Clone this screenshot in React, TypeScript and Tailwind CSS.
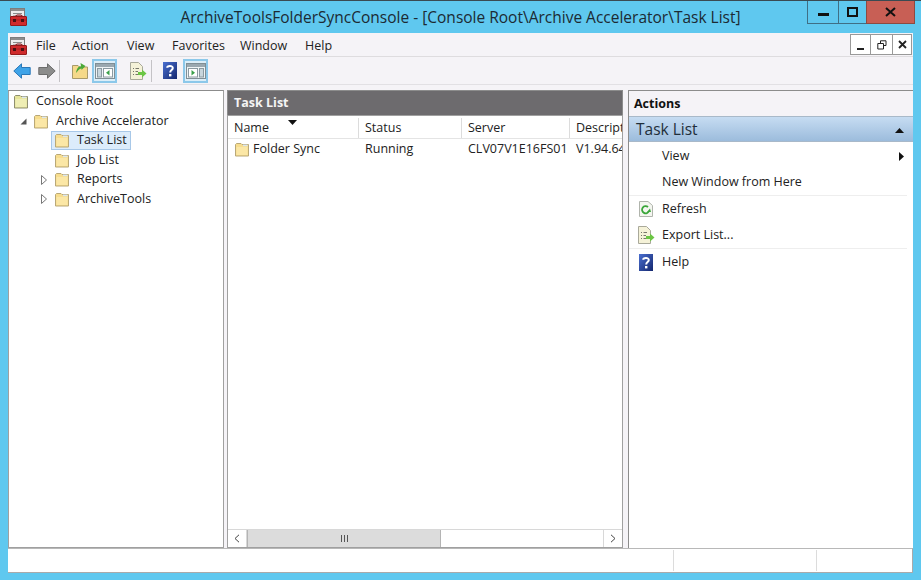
import React from 'react';

const font = { fontFamily: '"Open Sans", "Noto Sans", sans-serif' };

function Folder({ pale = false }: { pale?: boolean }) {
  return (
    <svg width="16" height="15" viewBox="0 0 16 15" className="shrink-0">
      <path d="M1.5 14V2.5L2.5 1.5H7L8 2.5H14.5V14Z" fill={pale ? '#e6e49a' : '#f7dd8e'} stroke={pale ? '#8f8f70' : '#b9a878'} />
      <path d="M2.5 13V5H13.5V13Z" fill={pale ? '#efeeb4' : '#fbe7a6'} />
      <rect x="9" y="2.6" width="4.5" height="1.6" fill="#dbe6ee" />
    </svg>
  );
}

function Toolbox({ className = '' }: { className?: string }) {
  return (
    <svg width="17" height="18" viewBox="0 0 17 18" className={className}>
      <rect x="0.5" y="0.5" width="14" height="10" fill="#ececec" stroke="#7d7d7d" />
      <rect x="1" y="1" width="13" height="2" fill="#8d8d8d" />
      <path d="M3 5.5H12M3 8H12" stroke="#8a8a8a" />
      <path d="M5 8.5L7 7H11L13 8.5" fill="none" stroke="#8f1319" />
      <rect x="0.5" y="8.5" width="16" height="9" rx="0.5" fill="#cf2a2c" stroke="#951a1c" />
      <path d="M1 12H16" stroke="#a51d20" />
      <rect x="3" y="11" width="3" height="3" fill="#4a1012" />
      <rect x="11" y="11" width="3" height="3" fill="#4a1012" />
    </svg>
  );
}

function Help() {
  return (
    <svg width="14" height="17" viewBox="0 0 14 17">
      <defs>
        <linearGradient id="hlp" x1="0" y1="0" x2="1" y2="1">
          <stop offset="0" stopColor="#4a6fd0" />
          <stop offset="1" stopColor="#14276e" />
        </linearGradient>
      </defs>
      <rect width="14" height="17" fill="url(#hlp)" />
      <path d="M4.2 5.8C4.2 3.6 9.8 3.2 9.8 6C9.8 8 7.2 8 7.2 10.4" fill="none" stroke="#fff" strokeWidth="2" />
      <rect x="6" y="12" width="2.4" height="2.4" fill="#fff" />
    </svg>
  );
}

function ExportIcon() {
  return (
    <svg width="18" height="18" viewBox="0 0 18 18">
      <path d="M1.5 0.5H9.5L13.5 4.5V17.5H1.5Z" fill="#f5f2d8" stroke="#a9a99a" />
      <path d="M4 6.5H5M6.5 6.5H10M4 9.5H5M6.5 9.5H9M4 12.5H5M6.5 12.5H9" stroke="#77776a" />
      <path d="M9 10H13V7.5L17.5 11.5L13 15.5V13H9Z" fill="#6cc644" />
    </svg>
  );
}

function PaneIcon({ side }: { side: 'left' | 'right' }) {
  return (
    <svg width="20" height="16" viewBox="0 0 20 16">
      <rect x="0.5" y="0.5" width="19" height="15" fill="#eef3f5" stroke="#7f8e95" />
      <rect x="1" y="1" width="18" height="3" fill="#9aa8b0" />
      {side === 'left' ? (
        <>
          <rect x="2.5" y="5.5" width="4" height="8.5" fill="#c8d6dd" stroke="#8b9aa1" />
          <rect x="8.5" y="5.5" width="9" height="8.5" fill="#fff" stroke="#8b9aa1" />
          <path d="M14.5 7L11 9.7L14.5 12.5Z" fill="#3aa04a" />
        </>
      ) : (
        <>
          <rect x="2.5" y="5.5" width="9" height="8.5" fill="#fff" stroke="#8b9aa1" />
          <rect x="13.5" y="5.5" width="4" height="8.5" fill="#c8d6dd" stroke="#8b9aa1" />
          <path d="M5.5 7L9 9.7L5.5 12.5Z" fill="#3aa04a" />
        </>
      )}
    </svg>
  );
}

function Arrow({ dir, color, edge }: { dir: 'left' | 'right'; color: string; edge: string }) {
  return (
    <svg width="18" height="16" viewBox="0 0 18 16">
      <path
        d={dir === 'left' ? 'M0.8 8L8.5 0.8V4.5H17.2V11.5H8.5V15.2Z' : 'M17.2 8L9.5 0.8V4.5H0.8V11.5H9.5V15.2Z'}
        fill={color}
        stroke={edge}
      />
    </svg>
  );
}

function TreeRow({
  label, indent, twisty, selected, pale, noTwisty,
}: { label: string; indent: string; twisty?: 'open' | 'closed'; selected?: boolean; pale?: boolean; noTwisty?: boolean }) {
  return (
    <div className={`flex h-[19.5px] items-center ${indent}`}>
      {!noTwisty && (
        <span className="flex w-[14px] shrink-0 items-center justify-center">
          {twisty === 'open' && (
            <svg width="7" height="7" viewBox="0 0 7 7"><path d="M6.5 0.5V6.5H0.5Z" fill="#555" /></svg>
          )}
          {twisty === 'closed' && (
            <svg width="6" height="10" viewBox="0 0 6 10"><path d="M0.5 0.5L5.5 5L0.5 9.5Z" fill="#fff" stroke="#777" /></svg>
          )}
        </span>
      )}
      <span
        className={`flex h-[19px] items-center gap-[7px] border px-[2px] ${
          selected ? 'border-[#a8c8e8] bg-[#dcecfb]' : 'border-transparent'
        }`}
      >
        <Folder pale={pale} />
        <span className="pr-[1px] text-[12.5px] text-[#222]">{label}</span>
      </span>
    </div>
  );
}

function ColHead({ label, width }: { label: string; width: string }) {
  return (
    <div className={`flex h-full shrink-0 items-center border-r border-[#dcdcdc] pl-[6px] text-[12.5px] text-[#222] ${width}`}>
      {label}
    </div>
  );
}

function ActionRow({ icon, label, last }: { icon?: React.ReactNode; label: string; last?: React.ReactNode }) {
  return (
    <div className="flex h-[26px] items-center text-[12.5px] text-[#222]">
      <span className="flex w-[33px] shrink-0 items-center justify-center">{icon}</span>
      <span className="flex-1">{label}</span>
      {last}
    </div>
  );
}

export default function App() {
  return (
    <div className="flex h-[580px] w-[921px] flex-col overflow-hidden bg-[#5fc8ef]" style={font}>
      {/* Title bar */}
      <div className="relative flex h-[33px] shrink-0 items-center justify-center border-t border-[#3a4a52] text-[15.5px] text-[#1c2a33]">
        <Toolbox className="absolute left-[10px] top-[7px]" />
        <span className="pt-[2px]">ArchiveToolsFolderSyncConsole - [Console Root\Archive Accelerator\Task List]</span>
        <div className="absolute right-[6px] top-0 flex h-[23px]">
          <div className="flex w-[31px] items-center justify-center border border-t-0 border-r-0 border-[#3f6f85]">
            <span className="mt-[4px] h-[3px] w-[11px] bg-[#111]" />
          </div>
          <div className="flex w-[28px] items-center justify-center border border-t-0 border-r-0 border-[#3f6f85]">
            <span className="h-[10px] w-[11px] border-2 border-[#111]" />
          </div>
          <div className="flex w-[49px] items-center justify-center border border-t-0 border-[#8c4a42] bg-[#c85f55] text-[#111]">
            <svg width="11" height="10" viewBox="0 0 11 10"><path d="M1 1L10 9M10 1L1 9" stroke="#111" strokeWidth="2" /></svg>
          </div>
        </div>
      </div>

      {/* Window body */}
      <div className="mx-[8px] flex h-[540px] w-[905px] flex-col bg-[#f5f3f7]">
        {/* Menu bar */}
        <div className="relative flex h-[24px] shrink-0 items-center border-b border-[#dedcdf] text-[12.5px] text-[#222]">
          <Toolbox className="ml-[2px] mt-[3px]" />
          <div className="ml-[9px] mt-[1px] flex pt-[2px]">
            <span className="w-[36px]">File</span>
            <span className="w-[55px]">Action</span>
            <span className="w-[45px]">View</span>
            <span className="w-[68px]">Favorites</span>
            <span className="w-[65px]">Window</span>
            <span>Help</span>
          </div>
          <div className="absolute right-[1px] top-[1px] flex h-[21px]">
            <div className="flex w-[21px] items-end justify-center border border-[#999] bg-white pb-[4px]">
              <span className="h-[2px] w-[7px] bg-[#222]" />
            </div>
            <div className="flex w-[21px] items-center justify-center border-y border-[#999] bg-white">
              <svg width="10" height="10" viewBox="0 0 10 10" fill="none" stroke="#222"><path d="M3.5 3V0.8H9V5.5H7M0.8 3.5H6.5V9H0.8Z" /></svg>
            </div>
            <div className="flex w-[20px] items-center justify-center border border-[#999] bg-white">
              <svg width="9" height="9" viewBox="0 0 9 9"><path d="M1 1L8 8M8 1L1 8" stroke="#222" strokeWidth="1.8" /></svg>
            </div>
          </div>
        </div>

        {/* Toolbar */}
        <div className="flex h-[28px] shrink-0 items-center border-b border-[#e2e0e4] pl-[4px]">
          <span className="ml-[1px]"><Arrow dir="left" color="#3fa3e8" edge="#2a78b8" /></span>
          <span className="ml-[7px]"><Arrow dir="right" color="#8c8c8c" edge="#6c6c6c" /></span>
          <span className="ml-[3px] h-[22px] w-px bg-[#c4c2c6]" />
          <span className="ml-[12px]">
            <svg width="16" height="17" viewBox="0 0 16 17">
              <path d="M0.5 16.5V3.5H6L7.5 5H15.5V16.5Z" fill="#f5d98a" stroke="#a99a6a" />
              <path d="M4 11C5 5 7 4 9 4.5L8.5 1L13.5 4L9.5 8L9.5 6.5C7 6.5 6 9 4 11Z" fill="#4aa838" />
            </svg>
          </span>
          <span className="ml-[4px] flex h-[24px] w-[25px] items-center justify-center border-2 border-[#8cc8ea] bg-[#dceef8]">
            <PaneIcon side="left" />
          </span>
          <span className="ml-[12px]"><ExportIcon /></span>
          <span className="ml-[4px] h-[22px] w-px bg-[#c4c2c6]" />
          <span className="ml-[11px]"><Help /></span>
          <span className="ml-[6px] flex h-[24px] w-[25px] items-center justify-center border-2 border-[#8cc8ea] bg-[#dceef8]">
            <PaneIcon side="right" />
          </span>
        </div>

        {/* Panes */}
        <div className="mt-[5px] flex h-[458px] shrink-0">
          {/* Tree */}
          <div className="h-full w-[216px] shrink-0 border border-[#a0a0a0] border-t-[#8c8c8c] bg-white pt-[1px]">
            <TreeRow label="Console Root" indent="pl-[1px]" pale noTwisty />
            <TreeRow label="Archive Accelerator" indent="pl-[7px]" twisty="open" />
            <TreeRow label="Task List" indent="pl-[28px]" selected />
            <TreeRow label="Job List" indent="pl-[28px]" />
            <TreeRow label="Reports" indent="pl-[28px]" twisty="closed" />
            <TreeRow label="ArchiveTools" indent="pl-[28px]" twisty="closed" />
          </div>

          {/* Results */}
          <div className="ml-[3px] flex h-full w-[396px] shrink-0 flex-col">
            <div className="flex h-[25px] shrink-0 items-center border border-b-0 border-[#8c8c8c] bg-[#6d6b6e] pl-[6px] text-[12.5px] font-bold text-[#f4f4f4]">
              Task List
            </div>
            <div className="flex min-h-0 flex-1 flex-col border border-[#a0a0a0] bg-white">
              <div className="relative flex h-[23px] shrink-0 overflow-hidden border-b border-[#e4e4e4] pt-[2px]">
                <ColHead label="Name" width="w-[131px]" />
                <ColHead label="Status" width="w-[103px]" />
                <ColHead label="Server" width="w-[108px]" />
                <ColHead label="Descript" width="w-[60px]" />
                <svg width="9" height="5" viewBox="0 0 9 5" className="absolute left-[60px] top-[4px]"><path d="M0 0H9L4.5 5Z" fill="#111" /></svg>
              </div>
              <div className="flex h-[20px] shrink-0 overflow-hidden text-[12.5px] text-[#222]">
                <div className="flex w-[131px] shrink-0 items-center gap-[3px] pl-[6px]">
                  <Folder />
                  <span>Folder Sync</span>
                </div>
                <div className="flex w-[103px] shrink-0 items-center pl-[6px]">Running</div>
                <div className="flex w-[108px] shrink-0 items-center pl-[6px]">CLV07V1E16FS01</div>
                <div className="flex w-[60px] shrink-0 items-center whitespace-nowrap pl-[6px]">V1.94.64</div>
              </div>
              <div className="flex-1" />
              {/* Horizontal scrollbar */}
              <div className="flex h-[18px] shrink-0 border-t border-[#d8d8d8] bg-white">
                <div className="flex w-[19px] items-center justify-center border-r border-[#d8d8d8]">
                  <svg width="6" height="9" viewBox="0 0 6 9" fill="none" stroke="#444"><path d="M5 0.8L1 4.5L5 8.2" /></svg>
                </div>
                <div className="flex w-[194px] items-center justify-center gap-[2px] border-x border-[#b4b4b4] bg-[#dcdcdc]">
                  <span className="h-[7px] w-px bg-[#555]" />
                  <span className="h-[7px] w-px bg-[#555]" />
                  <span className="h-[7px] w-px bg-[#555]" />
                </div>
                <div className="flex-1" />
                <div className="flex w-[19px] items-center justify-center border-l border-[#d8d8d8]">
                  <svg width="6" height="9" viewBox="0 0 6 9" fill="none" stroke="#444"><path d="M1 0.8L5 4.5L1 8.2" /></svg>
                </div>
              </div>
            </div>
          </div>

          {/* Actions */}
          <div className="ml-[5px] flex h-full min-w-0 flex-1 flex-col border-l border-t border-[#8c8c8c] bg-white">
            <div className="flex h-[25px] shrink-0 items-center bg-[#f5f3f7] pl-[5px] pt-[2px] text-[12.5px] font-bold text-[#111]">
              Actions
            </div>
            <div className="flex h-[26px] shrink-0 items-center justify-between border-y border-[#a9b9c9] bg-gradient-to-b from-[#c6dcf2] to-[#9cbcdc] pb-[1px] pl-[7px] pr-[9px] pt-[3px] text-[15.5px] text-[#1f2e3a]">
              <span>Task List</span>
              <svg width="9" height="5" viewBox="0 0 9 5"><path d="M0 5H9L4.5 0Z" fill="#111" /></svg>
            </div>
            <div className="pt-[1px]">
              <ActionRow
                label="View"
                last={<svg width="5" height="9" viewBox="0 0 5 9" className="mr-[9px]"><path d="M0 0L5 4.5L0 9Z" fill="#111" /></svg>}
              />
              <ActionRow label="New Window from Here" />
              <div className="mr-[6px] border-t border-[#eeeeee]" />
              <ActionRow
                label="Refresh"
                icon={
                  <svg width="14" height="16" viewBox="0 0 14 16">
                    <path d="M0.5 0.5H9L13.5 4.5V15.5H0.5Z" fill="#f4f6f0" stroke="#b0b4ac" />
                    <path d="M10 10A3.6 3.6 0 1 1 9 6" fill="none" stroke="#3aa63a" strokeWidth="1.8" />
                    <path d="M8 11L12 11L11 7.5Z" fill="#3aa63a" />
                  </svg>
                }
              />
              <ActionRow label="Export List..." icon={<ExportIcon />} />
              <div className="mr-[6px] border-t border-[#eeeeee]" />
              <ActionRow label="Help" icon={<Help />} />
            </div>
          </div>
        </div>

        {/* Status bar */}
        <div className="flex h-[25px] shrink-0 items-stretch justify-end border-b border-r border-t border-[#aaaaaa] border-t-[#b8b8b8] bg-white">
          <span className="my-px w-[143px] border-l border-[#dcdcdc]" />
          <span className="my-px w-[96px] border-l border-[#dcdcdc]" />
        </div>
      </div>
    </div>
  );
}
